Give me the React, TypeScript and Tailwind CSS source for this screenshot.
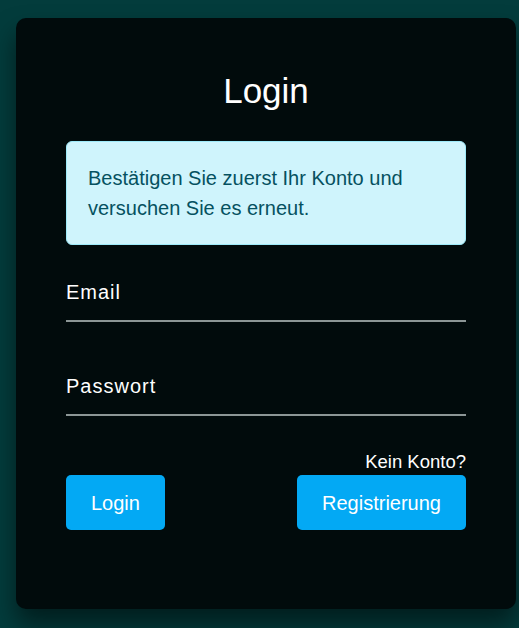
import React, { useState } from 'react';

const Field = ({ label, type }: { label: string; type: string }) => {
    const [value, setValue] = useState('');
    return (
        <div className="flex flex-col">
            <label className="text-[20px] leading-6 tracking-[1px] text-white">{label}</label>
            <input
                type={type}
                value={value}
                onChange={(e) => setValue(e.target.value)}
                className="h-[18px] w-full bg-transparent text-white outline-none border-b-[2px] border-[#8c9696]"
            />
        </div>
    );
};

const App = () => {
    return (
        <div className="min-h-[628px] w-full bg-[#033c3c] pt-[18px] pl-[16px] font-['Liberation_Sans',Arial,sans-serif]">
            <div className="w-[500px] h-[591px] bg-[#010b0c] rounded-[10px] shadow-[0_15px_25px_rgba(0,0,0,0.5)] px-[50px] pt-[53px]">
                {/* titulo */}
                <h2 className="text-[35px] leading-[40px] text-white text-center">Login</h2>

                {/* aviso */}
                <div className="mt-[30px] bg-[#cff4fc] border border-[#9eeaf9] rounded-[6px] p-[21px] text-[20px] leading-[30px] text-[#055160]">
                    Bestätigen Sie zuerst Ihr Konto und versuchen Sie es erneut.
                </div>

                <div className="mt-[35px]">
                    <Field label="Email" type="email" />
                </div>
                <div className="mt-[52px]">
                    <Field label="Passwort" type="password" />
                </div>

                {/* botones */}
                <div className="mt-[36px] flex items-end justify-between">
                    <button className="bg-[#03a9f4] text-white text-[20px] leading-6 px-[25px] py-[15.5px] rounded-[5px]">
                        Login
                    </button>
                    <div className="flex flex-col items-end">
                        <span className="text-[18.5px] leading-5 text-white mb-[3px]">Kein Konto?</span>
                        <button className="bg-[#03a9f4] text-white text-[20px] leading-6 px-[25px] py-[15.5px] rounded-[5px]">
                            Registrierung
                        </button>
                    </div>
                </div>
            </div>
        </div>
    );
};

export default App;
